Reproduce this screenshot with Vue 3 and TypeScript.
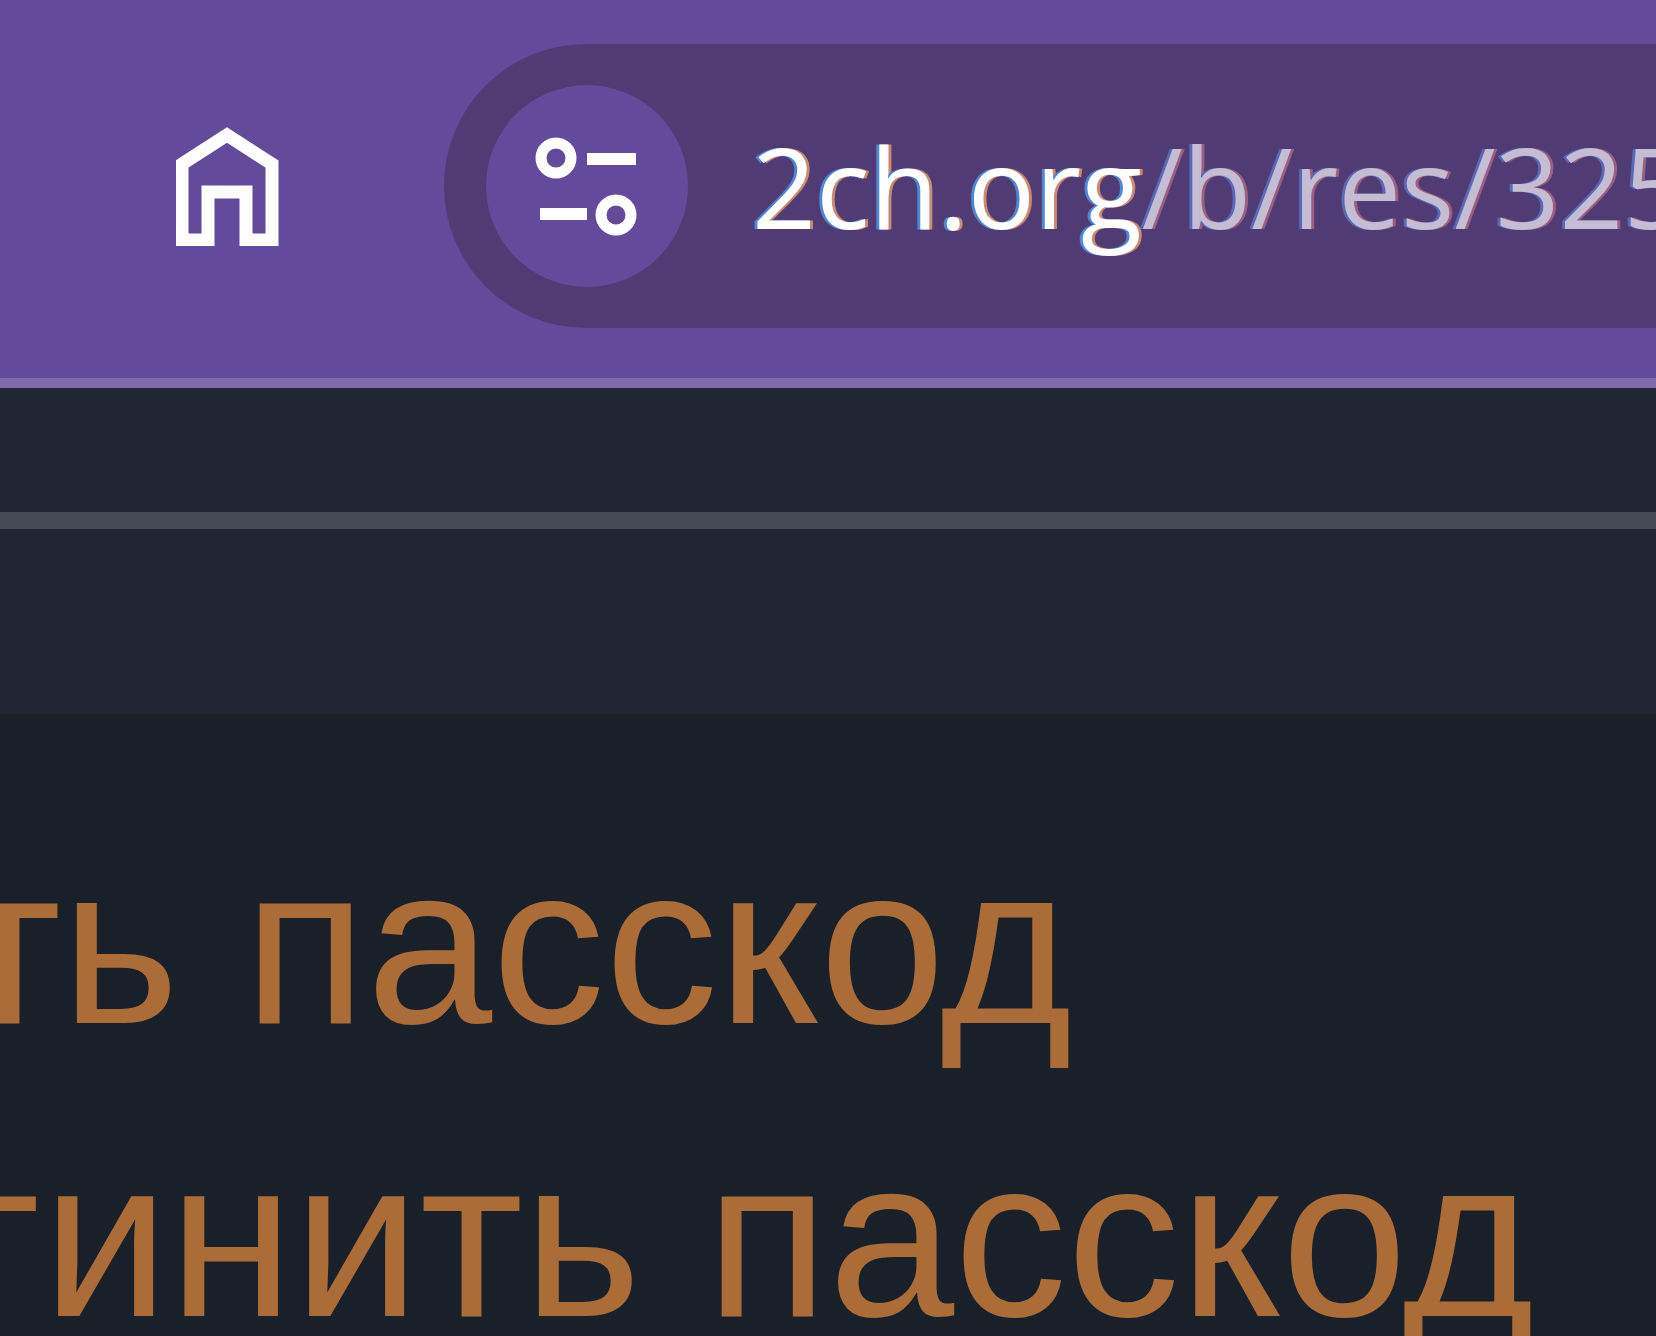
<script setup lang="ts">
interface PasscodeLink {
  action: string
  subject: string
  size: 'short' | 'long'
}

const links: PasscodeLink[] = [
  { action: 'ть', subject: 'пасскод', size: 'short' },
  { action: 'гинить', subject: 'пасскод', size: 'long' },
]
</script>

<template>
  <div class="window">
    <header class="toolbar">
      <button class="home" type="button" aria-label="Home">
        <svg viewBox="0 0 104 120" width="104" height="120" fill="none" stroke="#fff" stroke-width="13">
          <path d="M6 38 L51 9 L96 38 V114 H70 V66 H32 V114 H6 Z" />
        </svg>
      </button>
      <div class="address">
        <button class="site-info" type="button" aria-label="Site information">
          <svg viewBox="0 0 106 106" width="106" height="106" fill="none" stroke="#fff">
            <circle cx="22" cy="25" r="15" stroke-width="11" />
            <path d="M53 26 H102 M6 81 H53" stroke-width="12" />
            <circle cx="82" cy="82" r="15" stroke-width="11" />
          </svg>
        </button>
        <div class="url"><span class="host">2ch.org</span><span class="path">/b/res/325</span></div>
      </div>
    </header>
    <div class="strip"></div>
    <div class="strip tall"></div>
    <main class="page">
      <nav class="links">
        <a v-for="link in links" :key="link.action" class="link" href="#">
          <span class="action" :class="link.size">{{ link.action }}</span>
          <span>{{ link.subject }}</span>
        </a>
      </nav>
    </main>
  </div>
</template>

<style>
body {
  margin: 0;
  background: #1a2029;
}
</style>

<style scoped>
.window {
  display: flex;
  flex-direction: column;
  height: 100vh;
  overflow: hidden;
  background: #1a2029;
}

.toolbar {
  display: flex;
  flex-shrink: 0;
  padding: 44px 0 50px 176px;
  border-bottom: 10px solid #806aae;
  background: #644a9b;
}

button {
  display: flex;
  align-items: center;
  justify-content: center;
  flex-shrink: 0;
  padding: 0;
  border: 0;
  background: none;
}

.home {
  width: 104px;
  margin-right: 164px;
}

.address {
  display: flex;
  align-items: center;
  flex: 1;
  min-width: 0;
  height: 284px;
  padding-left: 42px;
  box-sizing: border-box;
  overflow: hidden;
  border-radius: 142px 0 0 142px;
  background: #503b75;
}

.site-info {
  width: 202px;
  height: 202px;
  border-radius: 50%;
  background: #644a9b;
}

.url {
  margin-left: 64px;
  font-family: "Open Sans", "Noto Sans", sans-serif;
  font-size: 112px;
  line-height: 160px;
  white-space: nowrap;
}

.host {
  color: #fff;
  text-shadow: -3px 0 #4f86d6, 3px 0 #c98a70;
}

.path {
  color: #c5bdd4;
  text-shadow: -3px 0 #5a68b8, 3px 0 #9c5f80;
}

.strip {
  flex-shrink: 0;
  height: 124px;
  border-bottom: 17px solid #454b54;
  background: #202633;
}

.strip.tall {
  height: 185px;
  border-bottom: 0;
}

.page {
  flex: 1;
  min-height: 0;
  padding-top: 84px;
}

.links {
  display: flex;
  flex-direction: column;
}

.link {
  display: flex;
  gap: 65px;
  height: 293px;
  color: #ab6c38;
  font-family: "Liberation Sans", Arial, sans-serif;
  font-size: 226px;
  line-height: 293px;
  text-decoration: none;
  white-space: nowrap;
}

.action {
  display: flex;
  justify-content: flex-end;
  flex-shrink: 0;
}

.short {
  width: 179px;
}

.long {
  width: 641px;
}
</style>
